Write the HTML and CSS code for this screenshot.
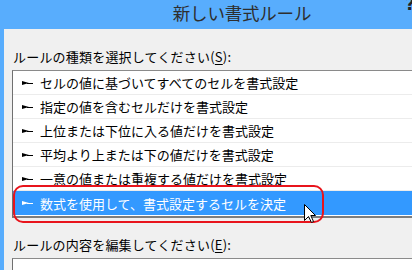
FILE: index.html
```html
<!DOCTYPE html>
<html lang="ja">
<head>
<meta charset="utf-8">
<title>新しい書式ルール</title>
<link rel="stylesheet" href="styles.css">
</head>
<body>
<div class="window">
  <header class="titlebar">
    <span class="title">新しい書式ルール</span>
    <span class="help">?</span>
  </header>
  <div class="frame">
    <div class="label label-first">ルールの種類を選択してください(<u>S</u>):</div>
    <ul class="rules">
      <li class="rule"><span class="arrow"></span>セルの値に基づいてすべてのセルを書式設定</li>
      <li class="rule"><span class="arrow"></span>指定の値を含むセルだけを書式設定</li>
      <li class="rule"><span class="arrow"></span>上位または下位に入る値だけを書式設定</li>
      <li class="rule"><span class="arrow"></span>平均より上または下の値だけを書式設定</li>
      <li class="rule"><span class="arrow"></span>一意の値または重複する値だけを書式設定</li>
      <li class="rule selected"><span class="arrow"></span>数式を使用して、書式設定するセルを決定</li>
    </ul>
    <div class="label label-second">ルールの内容を編集してください(<u>E</u>):</div>
    <div class="editbox"></div>
  </div>
  <div class="highlight"></div>
  <svg class="cursor" width="13" height="20" viewBox="0 0 13 20">
    <path d="M0.5 0.5 L0.5 16.5 L4.5 12.5 L7.5 18.5 L9.5 17.5 L6.8 11.5 L11.5 11.5 Z" fill="#fff" stroke="#000" stroke-width="1" stroke-linejoin="miter"/>
  </svg>
</div>
</body>
</html>
```

FILE: styles.css
```css
* { box-sizing: border-box; }
html, body {
  margin: 0;
  padding: 0;
  width: 412px;
  height: 270px;
  overflow: hidden;
  background: #f0f0f0;
  font-family: "Noto Sans CJK JP", "Noto Sans", sans-serif;
}
.window {
  position: relative;
  width: 412px;
  height: 270px;
  overflow: hidden;
}
.titlebar {
  height: 29px;
  background: #58adfd;
  position: relative;
  display: flex;
  justify-content: center;
}
.title {
  font-size: 17.5px;
  line-height: 26px;
  color: #2e2e2e;
  padding-left: 72px;
  letter-spacing: -0.2px;
}
.help {
  position: absolute;
  right: -3px;
  top: -6px;
  font-family: "DejaVu Sans", sans-serif;
  font-weight: bold;
  font-size: 17px;
  color: #222;
}
.frame {
  border-left: 4px solid #58adfd;
  background: #f0f0f0;
  height: 241px;
  padding-left: 8px;
  display: flex;
  flex-direction: column;
}
.label {
  font-size: 13px;
  line-height: 18px;
  color: #000;
  padding-left: 1px;
  letter-spacing: 0.2px;
  white-space: nowrap;
}
.label u { text-underline-offset: 2px; }
.label-first { margin-top: 19px; }
.rules {
  list-style: none;
  margin: 4px 0 0 0;
  padding: 0 0 1px 0;
  background: #fff;
  border-top: 1px solid #8a8a8a;
  border-left: 1px solid #707070;
  border-bottom: 2px solid #7d7d7d;
  width: 420px;
}
.rule {
  height: 24px;
  line-height: 24px;
  padding-top: 1px;
  padding-left: 9px;
  border-bottom: 1px solid #ececec;
  font-size: 13px;
  letter-spacing: 0;
  color: #000;
  display: flex;
  align-items: center;
  white-space: nowrap;
}
.rule.selected {
  background: #3399ff;
  color: #fff;
  border-bottom: none;
}
.arrow {
  width: 11px;
  height: 5px;
  margin-right: 7px;
  position: relative;
  flex: none;
}
.arrow::before {
  content: "";
  position: absolute;
  left: 0;
  top: 0;
  border-style: solid;
  border-width: 2.5px 0 2.5px 7px;
  border-color: transparent transparent transparent currentColor;
}
.arrow::after {
  content: "";
  position: absolute;
  left: 5px;
  top: 2px;
  width: 6px;
  height: 1px;
  background: currentColor;
}
.label-second { margin-top: 18px; }
.editbox {
  margin-top: 4px;
  height: 30px;
  width: 420px;
  background: #fff;
  border-top: 1px solid #8a8a8a;
  border-left: 1px solid #707070;
}
.highlight {
  position: absolute;
  left: 13px;
  top: 185px;
  width: 311px;
  height: 38px;
  border: 2px solid #e8141c;
  border-radius: 10px;
}
.cursor {
  position: absolute;
  left: 304px;
  top: 204px;
}
```
